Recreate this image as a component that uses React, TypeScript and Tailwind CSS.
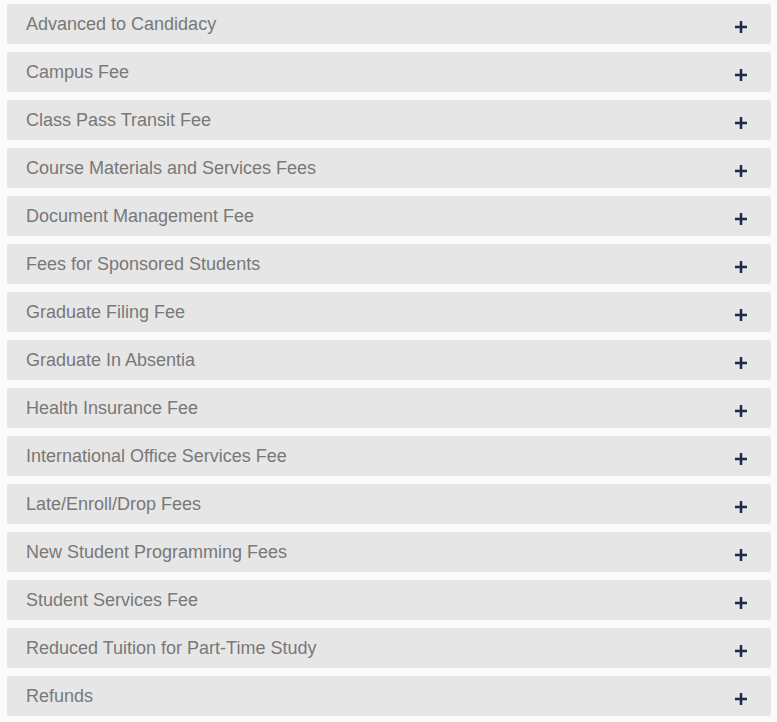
const items = [
  "Advanced to Candidacy",
  "Campus Fee",
  "Class Pass Transit Fee",
  "Course Materials and Services Fees",
  "Document Management Fee",
  "Fees for Sponsored Students",
  "Graduate Filing Fee",
  "Graduate In Absentia",
  "Health Insurance Fee",
  "International Office Services Fee",
  "Late/Enroll/Drop Fees",
  "New Student Programming Fees",
  "Student Services Fee",
  "Reduced Tuition for Part-Time Study",
  "Refunds",
];

function Plus() {
  return (
    <svg width="12" height="12" viewBox="0 0 12 12" className="shrink-0">
      <rect x="0" y="4.75" width="12" height="2.5" fill="#1c2b4a" />
      <rect x="4.75" y="0" width="2.5" height="12" fill="#1c2b4a" />
    </svg>
  );
}

export default function App() {
  return (
    <div className="min-h-[722px] w-[777px] bg-[#fafafa] pt-[4px] pl-[7px] pr-[6px] font-['Liberation_Sans',Arial,sans-serif]">
      <div className="flex flex-col gap-[8px]">
        {items.map((t) => (
          <div
            key={t}
            className="flex h-[40px] items-center justify-between rounded-[3px] bg-[#e6e6e6] pl-[19px] pr-[24px]"
          >
            <span className="text-[18px] text-[#787878]">{t}</span>
            <span className="mt-[5px]">
              <Plus />
            </span>
          </div>
        ))}
      </div>
    </div>
  );
}
